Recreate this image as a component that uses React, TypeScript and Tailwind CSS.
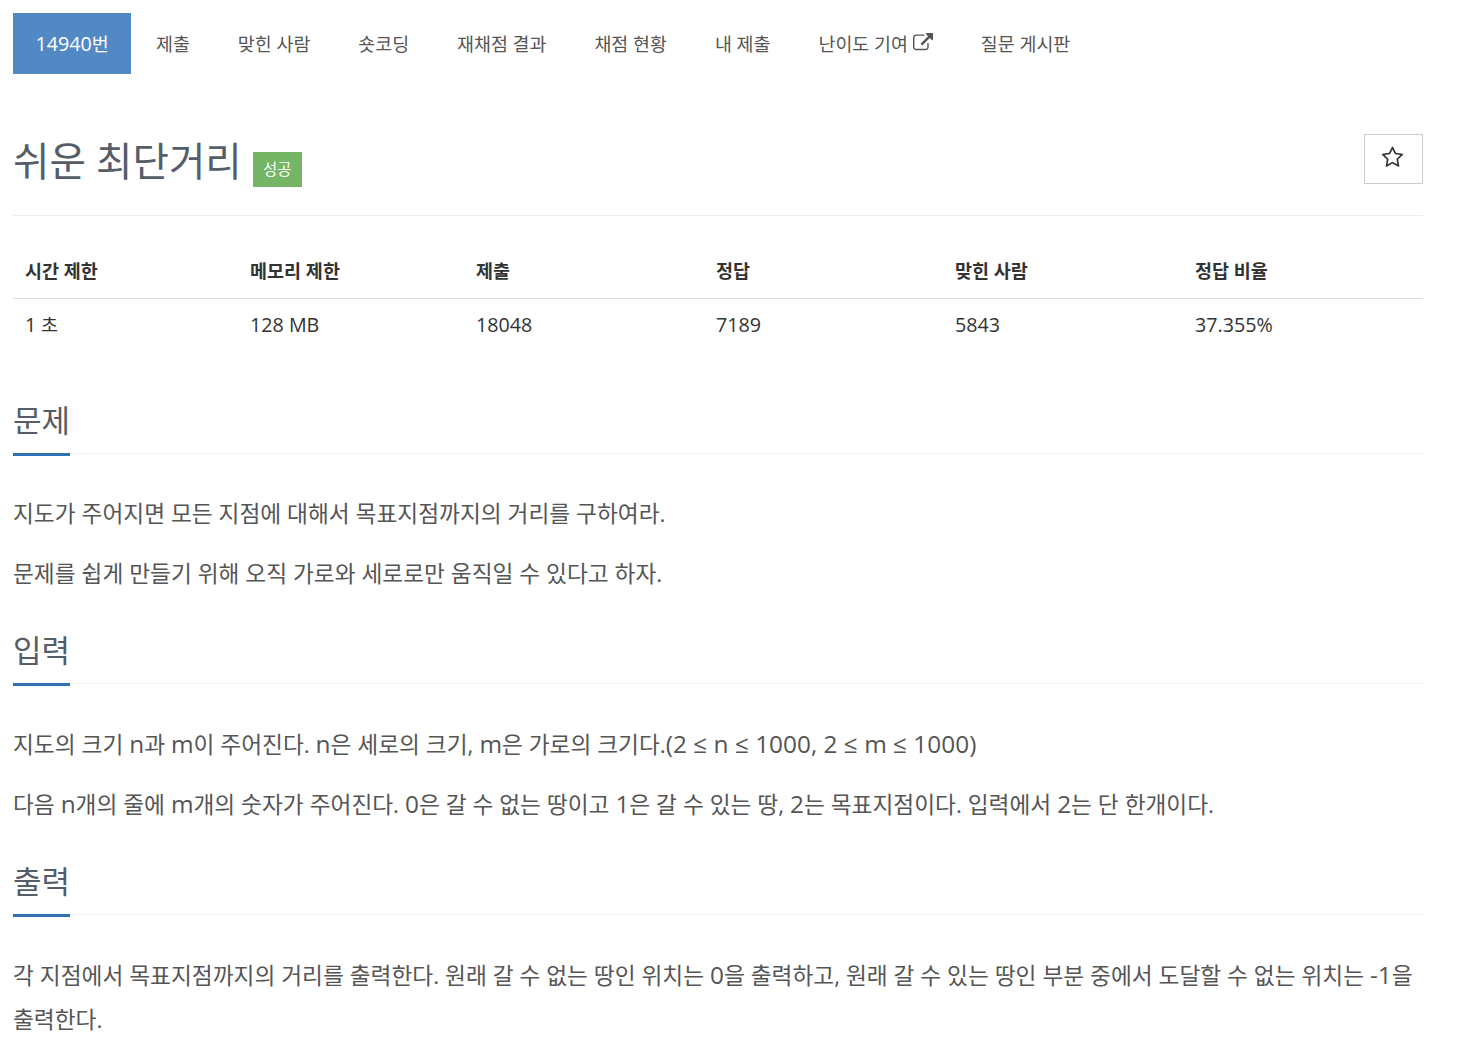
import { ReactNode } from 'react'

const font = '[font-family:"Open_Sans","Noto_Sans_CJK_KR",sans-serif]'

const tabs = ['제출', '맞힌 사람', '숏코딩', '재채점 결과', '채점 현황', '내 제출']

const columns = [
  { label: '시간 제한', value: '1', unit: ' 초', width: 'w-[225px]' },
  { label: '메모리 제한', value: '128 MB', unit: '', width: 'w-[226px]' },
  { label: '제출', value: '18048', unit: '', width: 'w-[240px]' },
  { label: '정답', value: '7189', unit: '', width: 'w-[239px]' },
  { label: '맞힌 사람', value: '5843', unit: '', width: 'w-[240px]' },
  { label: '정답 비율', value: '37.355%', unit: '', width: 'w-[240px]' },
]

// latin runs sit a bit larger than the hangul in body copy
function L({ children }: { children: ReactNode }) {
  return <span className="text-[24.4px]">{children}</span>
}

function Section({ title, children }: { title: string; children: ReactNode }) {
  return (
    <section>
      <div className="border-b border-dotted border-[#e5e5e5]">
        <h2 className="-mb-[3px] inline-block border-b-[3px] border-[#2f71b5] pb-[12px] text-[31px] leading-[42px] text-[#555d68]">
          {title}
        </h2>
      </div>
      <div className="pt-[16px] text-[#555]">{children}</div>
    </section>
  )
}

export default function App() {
  return (
    <div className={`${font} min-h-[1060px] bg-white px-[13px] pt-[13px] w-[1436px] text-[#333]`}>
      <nav className="flex h-[61px] items-center text-[18.4px] text-[#555]">
        <a className="mr-px flex h-full w-[118px] items-center justify-center bg-[#5289c5] text-white">
          <span className="text-[19.7px]">14940</span>번
        </a>
        {tabs.map((t) => (
          <a key={t} className="px-[24px]">
            {t}
          </a>
        ))}
        <a className="flex items-center gap-[5px] px-[24px]">
          난이도 기여
          <svg viewBox="0 0 1792 1792" className="h-[20px] w-[20px]" fill="#555">
            <path d="M1408 928v320q0 119-84.5 203.5t-203.5 84.5h-832q-119 0-203.5-84.5t-84.5-203.5v-832q0-119 84.5-203.5t203.5-84.5h704q14 0 23 9t9 23v64q0 14-9 23t-23 9h-704q-66 0-113 47t-47 113v832q0 66 47 113t113 47h832q66 0 113-47t47-113v-320q0-14 9-23t23-9h64q14 0 23 9t9 23zm384-864v512q0 26-19 45t-45 19-45-19l-176-176-652 652q-10 10-23 10t-23-10l-114-114q-10-10-10-23t10-23l652-652-176-176q-19-19-19-45t19-45 45-19h512q26 0 45 19t19 45z" />
          </svg>
        </a>
        <a className="px-[24px]">질문 게시판</a>
      </nav>

      <div className="mt-[61px] flex items-start justify-between border-b border-[#eee] pb-[28px]">
        <div className="flex items-center">
          <h1 className="text-[39.6px] leading-[52px] text-[#555d68]">쉬운 최단거리</h1>
          <span className="ml-[11px] mt-[17px] flex h-[35px] w-[49px] items-center justify-center bg-[#74b566] text-[15.5px] text-white">
            성공
          </span>
        </div>
        <button className="mt-[-1px] flex h-[50px] w-[59px] items-center justify-center border border-[#ccc] pb-[4px] pr-[2px] text-[#333]">
          <svg viewBox="0 0 1792 1792" className="h-[23px] w-[23px]" fill="#333">
            <path d="M1201 1004l306-297-422-62-189-382-189 382-422 62 306 297-73 421 378-199 377 199zm527-357q0 22-26 48l-363 354 86 500q1 7 1 20 0 50-41 50-19 0-40-12l-449-236-449 236q-22 12-40 12-21 0-31.5-14.5t-10.5-35.5q0-6 2-20l86-500-364-354q-25-27-25-48 0-37 56-46l502-73 225-455q19-41 49-41t49 41l225 455 502 73q56 9 56 46z" />
          </svg>
        </button>
      </div>

      <table className="mt-[34px] w-[1410px] table-fixed border-collapse text-[18.5px]">
        <thead>
          <tr className="border-b border-[#ddd]">
            {columns.map((c) => (
              <th key={c.label} className={`${c.width} h-[48px] px-[12px] pb-[6px] text-left font-bold text-[#333]`}>
                {c.label}
              </th>
            ))}
          </tr>
        </thead>
        <tbody>
          <tr>
            {columns.map((c) => (
              <td key={c.label} className="h-[55px] px-[12px] pb-[2px] text-[#333]">
                <span className="text-[19.7px]">{c.value}</span>
                {c.unit}
              </td>
            ))}
          </tr>
        </tbody>
      </table>

      <div className="mt-[46px] flex flex-col gap-[33px] text-[22.7px]">
        <Section title="문제">
          <p className="pt-[22px] leading-[44px]">지도가 주어지면 모든 지점에 대해서 목표지점까지의 거리를 구하여라.</p>
          <p className="mt-[16px] leading-[44px]">문제를 쉽게 만들기 위해 오직 가로와 세로로만 움직일 수 있다고 하자.</p>
        </Section>
        <Section title="입력">
          <p className="pt-[22px] leading-[44px]">
            지도의 크기 <L>n</L>과 <L>m</L>이 주어진다. <L>n</L>은 세로의 크기, <L>m</L>은 가로의 크기다.
            <L>(2 ≤ n ≤ 1000, 2 ≤ m ≤ 1000)</L>
          </p>
          <p className="mt-[15px] leading-[44px]">
            다음 <L>n</L>개의 줄에 <L>m</L>개의 숫자가 주어진다. <L>0</L>은 갈 수 없는 땅이고 <L>1</L>은 갈 수 있는 땅,{' '}
            <L>2</L>는 목표지점이다. 입력에서 <L>2</L>는 단 한개이다.
          </p>
        </Section>
        <Section title="출력">
          <p className="pt-[22px] leading-[44px]">
            각 지점에서 목표지점까지의 거리를 출력한다. 원래 갈 수 없는 땅인 위치는 <L>0</L>을 출력하고, 원래 갈 수 있는 땅인 부분 중에서
            도달할 수 없는 위치는 <L>-1</L>을 <span>출력한다.</span>
          </p>
        </Section>
      </div>
    </div>
  )
}
